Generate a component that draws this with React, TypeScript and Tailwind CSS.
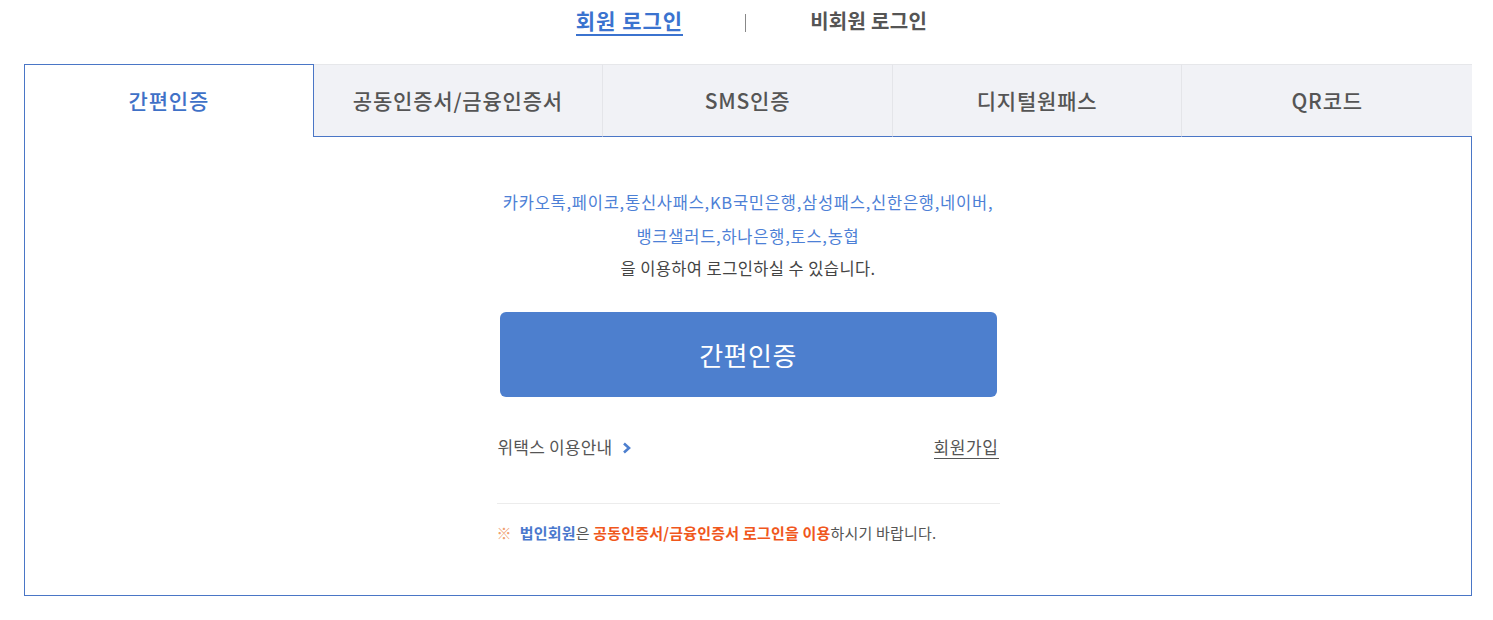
import React from "react";

const font = { fontFamily: '"Noto Sans CJK KR", "Noto Sans", sans-serif' };

const tabs = ["간편인증", "공동인증서/금융인증서", "SMS인증", "디지털원패스", "QR코드"];

const Tab: React.FC<{ label: string; active: boolean; last: boolean }> = ({ label, active, last }) =>
  active ? (
    <div className="flex items-center justify-center h-[73px] bg-white border-l border-t border-r border-[#4a76c6] text-[21px] tracking-[0.8px] font-medium text-[#3f71c7]">
      {label}
    </div>
  ) : (
    <div
      className={
        "flex items-center justify-center h-[73px] bg-[#f1f2f6] border-t border-[#e6e7ea] border-b border-b-[#4a76c6] text-[21px] tracking-[0.8px] font-medium text-[#555] " +
        (last ? "" : "border-r border-r-[#e4e5e9]")
      }
    >
      {label}
    </div>
  );

export default function App() {
  return (
    <div className="bg-white w-[1493px] h-[620px]" style={font}>
      <div className="flex items-center justify-center h-[64px] pb-[24px] pl-[10px]">
        <a className="text-[21px] tracking-[1px] font-semibold text-[#3b73cf] border-b-2 border-[#3b73cf] leading-[27px] pt-[3px]">
          회원 로그인
        </a>
        <span className="w-px h-[18px] bg-[#888] mt-[6px] ml-[62px] mr-[64px]" />
        <a className="text-[20px] tracking-[0.3px] font-semibold text-[#555] leading-[27px] pt-[3px] border-b-2 border-transparent">
          비회원 로그인
        </a>
      </div>
      <div className="ml-[24px] w-[1448px]">
        <div className="grid grid-cols-5">
          {tabs.map((t, i) => (
            <Tab key={t} label={t} active={i === 0} last={i === tabs.length - 1} />
          ))}
        </div>
        <div className="border-x border-b border-[#4a76c6] h-[459px] flex flex-col items-center pt-[48px]">
          <div className="w-[503px] flex flex-col items-center">
            <p className="text-center text-[16.5px] leading-[34px] text-[#4d80d6] tracking-[0.75px] whitespace-nowrap">
              카카오톡,페이코,통신사패스,KB국민은행,삼성패스,신한은행,네이버,
              <br />
              뱅크샐러드,하나은행,토스,농협
            </p>
            <p className="text-center text-[16.5px] leading-[30px] text-[#444] tracking-[0.4px]">
              을 이용하여 로그인하실 수 있습니다.
            </p>
            <button className="mt-[29px] w-[497px] h-[85px] rounded-[6px] bg-[#4d7fce] text-white text-[26px] tracking-[0.5px] leading-none">
              간편인증
            </button>
            <div className="w-full flex items-center justify-between mt-[38px] px-[1px] h-[24px]">
              <a className="flex items-center gap-[10px] text-[17px] text-[#555] tracking-[0.2px]">
                위택스 이용안내
                <svg width="10" height="12" viewBox="0 0 10 12" className="mt-[1px]">
                  <polyline points="2,1.5 7,6 2,10.5" fill="none" stroke="#4d7fce" strokeWidth="2.6" />
                </svg>
              </a>
              <a className="text-[17px] text-[#555] leading-[22px] border-b border-[#555] tracking-[0.6px]">
                회원가입
              </a>
            </div>
            <div className="w-full h-px bg-[#ececec] mt-[44px]" />
            <p className="w-full mt-[18px] text-[15px] text-[#555] tracking-[0.2px] whitespace-nowrap">
              <span className="text-[#f0a070] mr-[8px]">※</span>
              <b className="text-[#4a78cd] font-bold">법인회원</b>은{" "}
              <b className="text-[#f0571c] font-bold">공동인증서/금융인증서 로그인을 이용</b>하시기 바랍니다.
            </p>
          </div>
        </div>
      </div>
    </div>
  );
}
